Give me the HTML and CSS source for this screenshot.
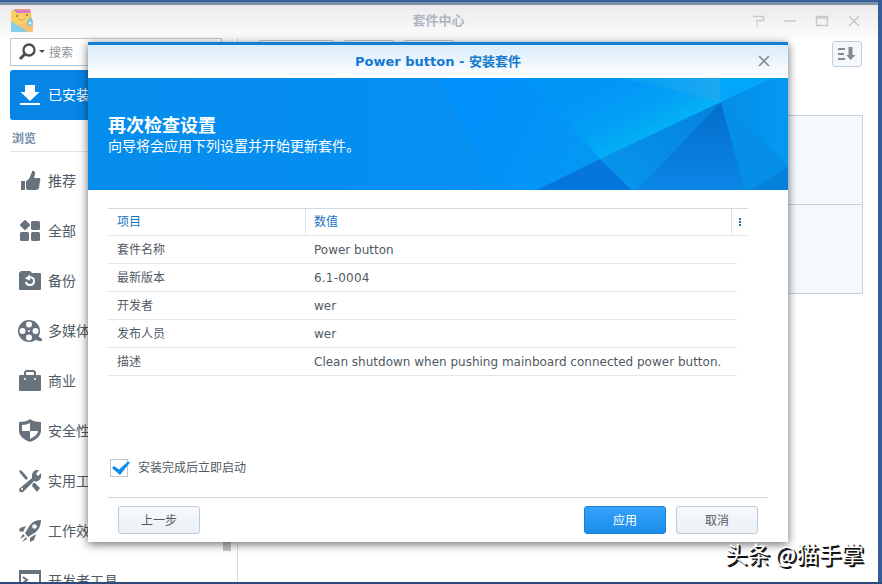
FILE: index.html
```html
<!DOCTYPE html>
<html lang="zh-CN">
<head>
<meta charset="utf-8">
<title>套件中心</title>
<link rel="stylesheet" href="styles.css">
</head>
<body>
<div class="window">
  <header class="titlebar">
    <svg class="app-icon" width="24" height="24" viewBox="0 0 24 24">
      <path d="M2 2h19l2 20H1z" fill="#f8c94f"/><path d="M2 2l3-2h15l1 4H2z" fill="#ed9a70"/><path d="M4 1h15l1-1v4H6z" fill="#dd6fc5"/>
      <path d="M1 2h5v4l12 2v12L1 12z" fill="#fbce54"/><path d="M1 12l17 11H1z" fill="#79cbea"/><path d="M8 16l15-5v10q0 2-2 2h-3z" fill="#f3be63"/>
      <circle cx="7" cy="7" r="1" fill="#8a6438"/><circle cx="17" cy="6" r="1" fill="#8a6438"/><path d="M8 10q4 3 7-1" fill="none" stroke="#dc9e36"/>
      <path d="M20 8q5 6 1 9-5 0-4-4z" fill="#6bbce2"/><circle cx="20" cy="14" r="1.5" fill="#dff4fc"/>
    </svg>
    <h1>套件中心</h1>
    <svg class="controls" width="108" height="12" viewBox="0 0 108 12" fill="none" stroke="#c9cacc" stroke-width="1.5">
      <path d="M0 3V1.500h10.500v4H4v3M4 9.500v2M31 6h12M63.500 1.500h11v9h-11zM63.500 3h11M96 1l10 10M106 1L96 11"/>
    </svg>
  </header>
  <div class="workspace">
    <aside class="sidebar">
      <div class="search">
        <svg width="28" height="20" viewBox="0 0 28 20"><circle cx="11" cy="8" r="5.500" fill="none" stroke="#484d52" stroke-width="2.300"/><path d="M7 12l-5 5" stroke="#484d52" stroke-width="3"/><path d="M21 8h6l-3 3z" fill="#484d52"/></svg>
        <span>搜索</span>
      </div>
      <div class="installed">
        <svg width="20" height="20" viewBox="0 0 20 20" fill="#fff"><path d="M5 0h10v7h4.500L10 16 .5 7H5zM0 18h20v2H0z"/></svg>
        <span>已安装</span>
      </div>
      <h2>浏览</h2>
      <nav>
        <a><svg viewBox="0 0 24 24"><path d="M3 12h4v9H3zM8 12l3-2 3-7q0-2 2-1 2 1 0 7h5q2 0 1 3l-1 7q-.5 2-3 2h-8l-2-1z"/></svg>推荐</a>
        <a><svg viewBox="0 0 24 24"><path d="M7 2l4 4-4 4-4-4z" stroke="#68727d" stroke-width="2" stroke-linejoin="round"/><rect x="13" y="2" width="9" height="9" rx="1.500"/><rect x="2" y="13" width="9" height="9" rx="1.500"/><rect x="13" y="13" width="9" height="9" rx="1.500"/></svg>全部</a>
        <a><svg viewBox="0 0 24 24"><path d="M1 4l2-2h9l2 2h8q1 0 1 1v15q0 1-1 1H2q-1 0-1-1z"/><path d="M10 8.500q6-1 6 3.500 0 4-4 4-3.500 0-4-3" fill="none" stroke="#fff" stroke-width="2"/><path d="M7 9.500l5-4v6z" fill="#fff"/></svg>备份</a>
        <a><svg viewBox="0 0 24 24"><circle cx="11" cy="12" r="11"/><path d="M15 20l5-3 4 3v2h-3l-3-1z"/><g fill="#fff"><circle cx="11" cy="5.500" r="3"/><circle cx="4.500" cy="12" r="3"/><circle cx="11" cy="18.500" r="3"/><circle cx="17.500" cy="12" r="3"/><circle cx="11" cy="12" r="1"/></g></svg>多媒体</a>
        <a><svg viewBox="0 0 24 24"><path d="M1 7q0-1 1-1h20q1 0 1 1v14q0 1-1 1H2q-1 0-1-1z"/><path d="M7 7V4q0-2 2-2h6q2 0 2 2v3" fill="none" stroke="#68727d" stroke-width="2"/><circle cx="7" cy="10" r="1" fill="#fff"/><circle cx="17" cy="10" r="1" fill="#fff"/></svg>商业</a>
        <a><svg viewBox="0 0 24 24"><path d="M1 3q8 0 11-3 3 3 11 3v9q0 7-11 11Q1 19 1 12z"/><path d="M12 4v8H4V6q5 0 8-2zM12 12h8q0 4-8 8z" fill="#fff"/></svg>安全性</a>
        <a><svg viewBox="0 0 24 24"><path d="M1 20L14 9q-1-6 4-8h3l-3 4 2 2 3-3q1 6-3 8-2 1-4 0L5 23q-4 1-4-3z"/><path d="M1 1l3 1 6 7-2 2-6-7zM15 14l2 0 5 5-3 4-5-6z"/><circle cx="4" cy="20" r="1" fill="#fff"/></svg>实用工具</a>
        <a><svg viewBox="0 0 24 24"><path d="M7 14L12 6q4-5 11-5 0 7-5 12l-8 5zM2 9l6-2-3 6-4-1zM12 19l6-4-2 6-4 2zM5 15l2 2-5 3zM8 18l1 2-5 3z"/><circle cx="16.500" cy="7.500" r="2.300" fill="#fff"/></svg>工作效率</a>
        <a><svg viewBox="0 0 24 24"><path d="M1 1h22v20H1z"/><path d="M3 5h18v14H3z" fill="#fff"/><path d="M5 8l4 3-4 3" fill="none" stroke="#68727d" stroke-width="2"/></svg>开发者工具</a>
      </nav>
      <i class="scroll-thumb"></i>
    </aside>
    <main>
      <div class="toolbar">
        <div class="tabs"><i class="wide"></i><i></i><i></i></div>
        <button class="sort"><svg width="18" height="14" viewBox="0 0 18 14"><path d="M0 1h7v2H0zM0 6h6v2H0zM0 11h7v2H0zM10.500 0h4v8h3l-5 5-4-5h2z" fill="#858b91"/></svg></button>
      </div>
      <div class="packages"><div></div><div></div></div>
    </main>
  </div>
</div>
<section class="dialog">
  <header class="dialog-title"><h2>Power button - 安装套件</h2><svg width="12" height="12" viewBox="0 0 12 12"><path d="M1 1l10 10M11 1L1 11" stroke="#858f98" stroke-width="1.700"/></svg></header>
  <div class="banner">
    <svg class="facets" width="700" height="112" viewBox="0 0 700 112">
      <defs>
        <linearGradient id="base"><stop offset="0" stop-color="#058ded"/><stop offset=".5" stop-color="#058ff2"/><stop offset="1" stop-color="#029cf2"/></linearGradient>
        <linearGradient id="left" gradientUnits="userSpaceOnUse" x1="352" y1="0" x2="512" y2="81"><stop offset="0" stop-color="#0090fd"/><stop offset=".5" stop-color="#0292f8"/><stop offset="1" stop-color="#0499f3"/></linearGradient>
        <linearGradient id="cyan" gradientUnits="userSpaceOnUse" x1="530" y1="0" x2="565" y2="68"><stop offset="0" stop-color="#0296f7"/><stop offset=".5" stop-color="#039ff5"/><stop offset="1" stop-color="#05b7f6"/></linearGradient>
        <linearGradient id="mid" x1="1" y1="0" x2="0" y2="1"><stop offset="0" stop-color="#0582dd"/><stop offset="1" stop-color="#0897ed"/></linearGradient>
        <linearGradient id="deep" x1="0" y1="0" x2="0" y2="1"><stop offset="0" stop-color="#046dcb"/><stop offset="1" stop-color="#0a86e7"/></linearGradient>
        <linearGradient id="right"><stop offset="0" stop-color="#068ce6"/><stop offset="1" stop-color="#0399f2"/></linearGradient>
        <linearGradient id="top"><stop offset="0" stop-color="#049ff8"/><stop offset="1" stop-color="#1ca9f0"/></linearGradient>
      </defs>
      <path d="M0 0h700v112H0z" fill="url(#base)"/>
      <path d="M352 0h183v81h-23l-63 31h-42z" fill="url(#left)"/>
      <path d="M441 0h94l98 24-121 57z" fill="url(#cyan)"/>
      <path d="M535 0h97l1 24z" fill="url(#top)"/><path d="M632 0h52l-51 24z" fill="#02a7fc"/>
      <path d="M684 0h16v87l-67-63z" fill="url(#right)"/>
      <path d="M512 81l-63 31h95z" fill="#0576de"/><path d="M633 24L512 81l32 31h5z" fill="url(#mid)"/>
      <path d="M633 24l-84 88h108z" fill="url(#deep)"/><path d="M633 24l24 88h5l38-23v-2z" fill="#058fe6"/><path d="M700 89v23h-38z" fill="#0681dc"/>
    </svg>
    <div class="banner-text"><h3>再次检查设置</h3><p>向导将会应用下列设置并开始更新套件。</p></div>
  </div>
  <div class="dialog-body">
    <div class="grid-head"><span class="key">项目</span><span class="value">数值</span><span class="menu"><i></i><i></i><i></i></span></div>
    <div class="row"><span class="key">套件名称</span><span class="value">Power button</span></div>
    <div class="row"><span class="key">最新版本</span><span class="value version">6.1-0004</span></div>
    <div class="row"><span class="key">开发者</span><span class="value">wer</span></div>
    <div class="row"><span class="key">发布人员</span><span class="value">wer</span></div>
    <div class="row"><span class="key">描述</span><span class="value">Clean shutdown when pushing mainboard connected power button.</span></div>
    <div class="check"><b><svg width="20" height="16" viewBox="0 0 20 16"><path d="M1 8l2-2 5 3.500L17 1.500l2 1L9 15z" fill="#0b8cec"/></svg></b><span>安装完成后立即启动</span></div>
    <footer><button>上一步</button><button class="primary">应用</button><button>取消</button></footer>
  </div>
</section>
<div class="watermark">头条 @猫手掌</div>
</body>
</html>
```
FILE: styles.css
```css
* { box-sizing: border-box; }
body { margin: 0; width: 882px; height: 584px; overflow: hidden; position: relative; background: #345d9b; border-bottom: 2px solid #2e4a7b; display: flow-root; font: 12px/18px "DejaVu Sans", "Noto Sans CJK SC", sans-serif; color: #505a64; }
h1, h2, h3, p { margin: 0; }
button { font: inherit; color: inherit; padding: 0; }
.window { margin-top: 2px; width: 878px; height: 580px; overflow: hidden; border-top: 3px solid #7c92a4; background: #fff; }
.titlebar { height: 33px; display: flex; align-items: center; background: linear-gradient(#ebebed, #fcfcfd); padding: 0 17px 1px 10px; }
.titlebar h1 { flex: 1; text-align: center; font-size: 13px; color: #afb6bf; padding-left: 90px; }
.app-icon { opacity: .9; }
.workspace { display: flex; height: 544px; }
.sidebar { position: relative; width: 238px; border-right: 1px solid #d8dadd; padding-left: 10px; flex: none; }
.search { width: 212px; height: 28px; border: 1px solid #bfc9d6; background: #fff; display: flex; align-items: center; gap: 3px; padding-left: 7px; color: #8e959c; }
.search span { padding-top: 2px; }
.installed { margin-top: 4px; width: 216px; height: 50px; background: #0685e6; border-radius: 3px; color: #fff; display: flex; align-items: center; gap: 8px; padding-left: 10px; font-size: 14px; }
.sidebar h2 { height: 32px; width: 216px; border-bottom: 1px solid #e2e5e8; font-size: 12px; line-height: 38px; color: #7891aa; padding-left: 2px; }
nav { padding-top: 4px; }
nav a { height: 50px; display: flex; align-items: center; gap: 6px; padding-left: 8px; font-size: 14px; }
nav svg { width: 24px; height: 24px; fill: #68727d; flex: none; }
.scroll-thumb { position: absolute; right: 6px; top: 450px; width: 8px; height: 63px; background: #c4c4c4; }
main { flex: 1; padding: 2px 15px 0 20px; }
.toolbar { display: flex; justify-content: space-between; height: 75px; }
.tabs { display: flex; gap: 8px; }
.tabs i { width: 52px; height: 28px; border: 1px solid #c2c8ce; border-radius: 3px; }
.tabs .wide { width: 77px; }
.sort { width: 30px; height: 26px; margin-top: 1px; margin-right: 1px; border: 1px solid #c2ced9; border-radius: 3px; background: #f4f8fb; display: grid; place-items: center; }
.packages { border: 1px solid #c8d0d9; background: #f4f9fe; height: 179px; }
.packages div { height: 88px; }
.packages div + div { border-top: 1px solid #c8d0d9; }
.dialog { position: absolute; left: 88px; top: 42px; width: 700px; height: 500px; background: #fff; border-top: 3px solid #147dd4; box-shadow: 0 2px 9px rgba(0,0,0,.6); }
.dialog-title { height: 33px; display: flex; align-items: center; background: linear-gradient(#d9ecfb, #fff); padding-right: 18px; }
.dialog-title h2 { flex: 1; text-align: center; padding-left: 30px; font-size: 13px; color: #1479cf; }
.dialog-title svg { margin-bottom: 1px; }
.banner { height: 112px; position: relative; padding: 37px 20px 0; color: #fff; overflow: hidden; }
.facets { position: absolute; inset: 0; }
.banner-text { position: relative; }
.banner h3 { font-size: 18px; line-height: 22px; }
.banner p { font-size: 14px; line-height: 18px; }
.dialog-body { padding: 18px 20px 0; }
.grid-head { width: 640px; height: 28px; display: flex; border-top: 1px solid #d3d9df; border-bottom: 1px solid #dceaf4; color: #1974c4; line-height: 26px; }
.key { width: 197px; padding-left: 9px; flex: none; }
.value { flex: 1; padding-left: 9px; white-space: nowrap; }
.version { letter-spacing: .2px; }
.grid-head .value { border-left: 1px solid #d5e8f4; padding-left: 8px; }
.menu { width: 17px; border-left: 1px solid #d9e2e9; display: flex; flex-direction: column; align-items: center; justify-content: center; gap: 1px; }
.menu i { width: 2px; height: 2px; background: #24709f; }
.row { width: 629px; height: 28px; display: flex; border-bottom: 1px solid #e3e7eb; line-height: 29px; }
.check { height: 20px; margin-top: 82px; display: flex; align-items: center; padding-left: 2px; gap: 10px; }
.check b { width: 18px; height: 18px; border: 1px solid #bbc7d3; }
.check svg { display: block; }
footer { margin-top: 19px; width: 660px; border-top: 1px solid #d4d7d8; padding: 8px 10px; display: flex; gap: 10px; }
footer button { width: 82px; height: 28px; border: 1px solid #bfcbd7; border-radius: 3px; background: linear-gradient(#f7fafd, #eaf0f5); padding-top: 1px; }
footer button:first-child { margin-right: auto; }
footer .primary { color: #fff; border-color: #167ed4; background: linear-gradient(#35a2fb, #1a8de9); }
.watermark { position: absolute; left: 725px; top: 536px; font: 22.5px/34px "Noto Sans CJK SC", sans-serif; color: #fff; text-shadow: 1px 1px 0 #111, 2px 2px 0 #111; white-space: nowrap; }
```
